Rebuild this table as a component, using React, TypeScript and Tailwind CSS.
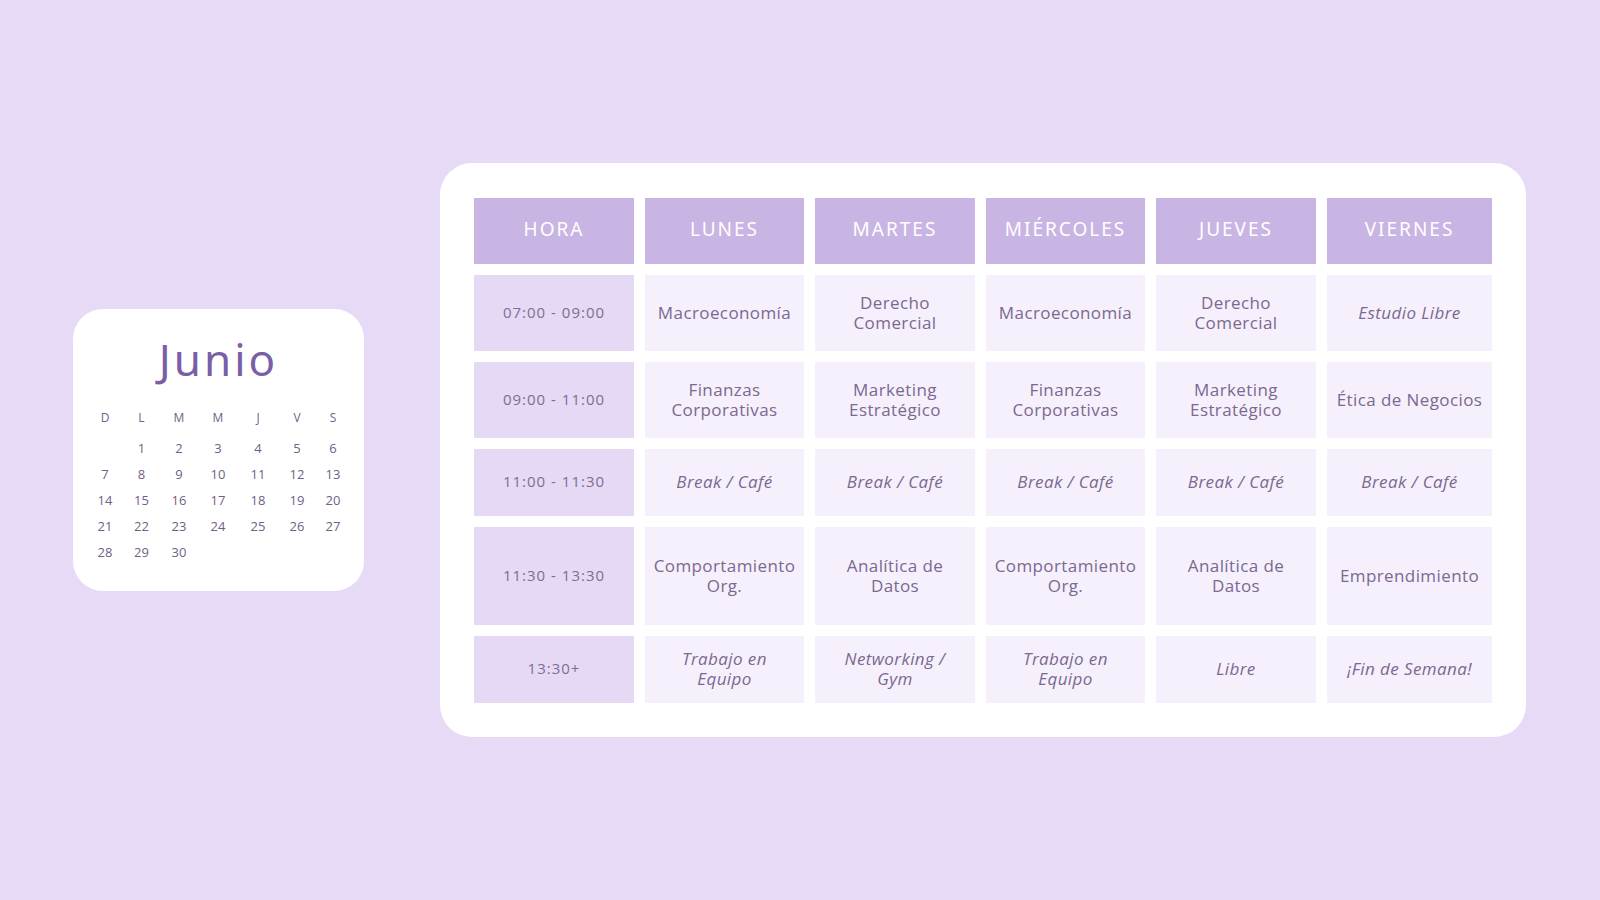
import React from 'react';

const days = ['D', 'L', 'M', 'M', 'J', 'V', 'S'];
const weeks: (number | null)[][] = [
  [null, 1, 2, 3, 4, 5, 6],
  [7, 8, 9, 10, 11, 12, 13],
  [14, 15, 16, 17, 18, 19, 20],
  [21, 22, 23, 24, 25, 26, 27],
  [28, 29, 30, null, null, null, null],
];

type Cell = { text: string[]; italic?: boolean };

const rows: { time: string; h: string; cells: Cell[] }[] = [
  {
    time: '07:00 - 09:00',
    h: 'h-[76px]',
    cells: [
      { text: ['Macroeconomía'] },
      { text: ['Derecho', 'Comercial'] },
      { text: ['Macroeconomía'] },
      { text: ['Derecho', 'Comercial'] },
      { text: ['Estudio Libre'], italic: true },
    ],
  },
  {
    time: '09:00 - 11:00',
    h: 'h-[76px]',
    cells: [
      { text: ['Finanzas', 'Corporativas'] },
      { text: ['Marketing', 'Estratégico'] },
      { text: ['Finanzas', 'Corporativas'] },
      { text: ['Marketing', 'Estratégico'] },
      { text: ['Ética de Negocios'] },
    ],
  },
  {
    time: '11:00 - 11:30',
    h: 'h-[67px]',
    cells: [
      { text: ['Break / Café'], italic: true },
      { text: ['Break / Café'], italic: true },
      { text: ['Break / Café'], italic: true },
      { text: ['Break / Café'], italic: true },
      { text: ['Break / Café'], italic: true },
    ],
  },
  {
    time: '11:30 - 13:30',
    h: 'h-[98px]',
    cells: [
      { text: ['Comportamiento', 'Org.'] },
      { text: ['Analítica de', 'Datos'] },
      { text: ['Comportamiento', 'Org.'] },
      { text: ['Analítica de', 'Datos'] },
      { text: ['Emprendimiento'] },
    ],
  },
  {
    time: '13:30+',
    h: 'h-[67px]',
    cells: [
      { text: ['Trabajo en', 'Equipo'], italic: true },
      { text: ['Networking /', 'Gym'], italic: true },
      { text: ['Trabajo en', 'Equipo'], italic: true },
      { text: ['Libre'], italic: true },
      { text: ['¡Fin de Semana!'], italic: true },
    ],
  },
];

const headers = ['HORA', 'LUNES', 'MARTES', 'MIÉRCOLES', 'JUEVES', 'VIERNES'];
const colW = ['w-[36px]', 'w-[37px]', 'w-[38px]', 'w-[40px]', 'w-[40px]', 'w-[38px]', 'w-[34px]'];

const Calendar = () => (
  <div className="w-[291px] h-[282px] shrink-0 rounded-[30px] bg-white px-[14px] pt-[22px] font-['Open_Sans',sans-serif] text-[#6f5f86]">
    {/* Month */}
    <div className="text-center text-[44px] leading-[56px] tracking-[3px] text-[#7a5ea6] font-['Noto_Sans',sans-serif]">
      Junio
    </div>
    <div className="mt-[23px] flex">
      {days.map((d, i) => (
        <div key={i} className={`${colW[i]} text-center text-[12px] leading-[16px]`}>
          {d}
        </div>
      ))}
    </div>
    <div className="mt-[14px] flex flex-col gap-[9px]">
      {weeks.map((w, wi) => (
        <div key={wi} className="flex">
          {w.map((n, i) => (
            <div key={i} className={`${colW[i]} text-center text-[13px] leading-[17px]`}>
              {n ?? ''}
            </div>
          ))}
        </div>
      ))}
    </div>
  </div>
);

const Schedule = () => (
  <div className="w-[1086px] shrink-0 rounded-[32px] bg-white p-[34px] pt-[35px]">
    <div className="grid grid-cols-[160px_159px_160px_159px_160px_165px] gap-[11px]">
      {headers.map((h) => (
        <div
          key={h}
          className="h-[66px] bg-[#c9b5e3] flex items-center justify-center pb-[3px] text-white text-[19px] tracking-[2px] font-['Noto_Sans',sans-serif]"
        >
          {h}
        </div>
      ))}
      {rows.map((r) => (
        <React.Fragment key={r.time}>
          <div
            className={`${r.h} bg-[#e6d9f5] flex items-center justify-center pb-[2px] text-[15px] tracking-[1px] text-[#7e6d94] font-['Open_Sans',sans-serif]`}
          >
            {r.time}
          </div>
          {r.cells.map((c, i) => (
            <div
              key={i}
              className={`${r.h} bg-[#f6f0fc] flex flex-col items-center justify-center pb-[1px] text-center text-[17px] leading-[20px] tracking-[0.4px] text-[#7a6990] font-['Open_Sans',sans-serif] ${c.italic ? 'italic' : ''}`}
            >
              {c.text.map((t) => (
                <span key={t} className="block">
                  {t}
                </span>
              ))}
            </div>
          ))}
        </React.Fragment>
      ))}
    </div>
  </div>
);

export default function App() {
  return (
    <div className="w-full h-[900px] bg-[#e7daf6] flex items-center pl-[73px] gap-[76px]">
      <Calendar />
      <Schedule />
    </div>
  );
}
